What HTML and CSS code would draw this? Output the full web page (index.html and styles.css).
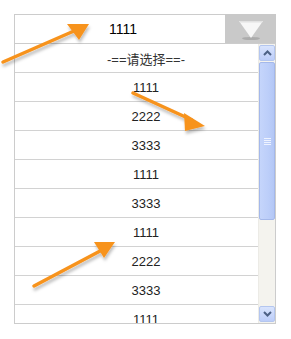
FILE: index.html
```html
<!DOCTYPE html>
<html lang="zh">
<head>
    <meta charset="UTF-8">
    <title>下拉选择</title>
    <link rel="stylesheet" href="styles.css">
</head>
<body>
    <div class="combo">
        <div class="combo-head">
            <span class="combo-value">1111</span>
            <span class="combo-btn">
                <svg width="28" height="22" viewBox="0 0 28 22">
                    <ellipse cx="14" cy="19.5" rx="9" ry="1.6" fill="#9a9a9a" opacity="0.6"/>
                    <polygon points="2,2 26,2 14,19" fill="#f7f7f7"/>
                    <polygon points="2,2 26,2 25,3.5 3,3.5" fill="#e2e2e2"/>
                </svg>
            </span>
        </div>
        <div class="combo-list">
            <ul class="options">
                <li>-==请选择==-</li>
                <li>1111</li>
                <li>2222</li>
                <li>3333</li>
                <li>1111</li>
                <li>3333</li>
                <li>1111</li>
                <li>2222</li>
                <li>3333</li>
                <li>1111</li>
            </ul>
            <div class="scrollbar">
                <div class="sb-btn">
                    <svg width="9" height="6" viewBox="0 0 9 6"><polyline points="1,5 4.5,1.5 8,5" fill="none" stroke="#4d6185" stroke-width="2"/></svg>
                </div>
                <div class="sb-thumb">
                    <span class="grip"></span>
                </div>
                <div class="sb-track"></div>
                <div class="sb-btn">
                    <svg width="9" height="6" viewBox="0 0 9 6"><polyline points="1,1 4.5,4.5 8,1" fill="none" stroke="#4d6185" stroke-width="2"/></svg>
                </div>
            </div>
        </div>
    </div>

    <svg class="notes" width="291" height="339" viewBox="0 0 291 339">
        <defs>
            <filter id="shade" x="-20%" y="-20%" width="140%" height="160%">
                <feDropShadow dx="1" dy="3" stdDeviation="1.5" flood-color="#000" flood-opacity="0.25"/>
            </filter>
        </defs>
        <g fill="#f7931e" stroke="#f7931e" filter="url(#shade)">
            <line x1="3" y1="62" x2="74" y2="31" stroke-width="3.5" stroke-linecap="round"/>
            <polygon points="89,24 67,24 79,40" stroke="none"/>
            <line x1="133" y1="93" x2="192" y2="120" stroke-width="3.5" stroke-linecap="round"/>
            <polygon points="205,126 184,113 185,131" stroke="none"/>
            <line x1="34" y1="286" x2="102" y2="250" stroke-width="3.5" stroke-linecap="round"/>
            <polygon points="115,242 94,242 104,258" stroke="none"/>
        </g>
    </svg>
</body>
</html>
```

FILE: styles.css
```css
body {
    margin: 0;
    background-color: #ffffff;
    font-family: "Liberation Sans", Arial, "Noto Sans CJK SC", sans-serif;
}
.combo {
    margin: 14px 0 0 14px;
    width: 260px;
    border: 1px solid #cccccc;
}
.combo-head {
    display: flex;
    height: 28px;
    border-bottom: 1px solid #cccccc;
}
.combo-value {
    flex: 1;
    display: flex;
    align-items: center;
    justify-content: center;
    padding-left: 6px;
    font-size: 14px;
    color: #000000;
}
.combo-btn {
    width: 51px;
    margin-right: -1px;
    margin-top: -1px;
    height: 29px;
    background-color: #c9c9c9;
    display: flex;
    align-items: center;
    justify-content: center;
}
.combo-btn svg {
    margin-top: 3px;
}
.combo-list {
    display: flex;
    height: 279px;
    overflow: hidden;
}
.options {
    flex: 1;
    list-style: none;
    margin: 0;
    padding: 0;
}
.options li {
    height: 28px;
    border-bottom: 1px solid #d2d2d2;
    display: flex;
    align-items: center;
    justify-content: center;
    padding-left: 19px;
    font-size: 13px;
    color: #222222;
}
.options li:first-child {
    font-family: "Liberation Sans", "Noto Sans CJK SC", sans-serif;
    font-size: 13px;
    color: #333333;
}
.scrollbar {
    width: 16px;
    display: flex;
    flex-direction: column;
    padding: 1px 0;
    background-color: #f4f3ee;
    border-left: 1px solid #ecebe6;
}
.sb-btn {
    height: 14px;
    border: 1px solid #b4c6ef;
    border-radius: 2px;
    background: linear-gradient(#d9e4fd, #bccdf9);
    display: flex;
    align-items: center;
    justify-content: center;
}
.sb-thumb {
    height: 156px;
    margin-top: 1px;
    border: 1px solid #a4b8ea;
    border-radius: 2px;
    background: linear-gradient(90deg, #c5d5fb, #bccef9 60%, #b3c7f6);
    display: flex;
    align-items: center;
    justify-content: center;
}
.grip {
    width: 7px;
    height: 7px;
    background: repeating-linear-gradient(#eef3ff 0 1px, transparent 1px 2px);
}
.sb-track {
    flex: 1;
}
.notes {
    position: absolute;
    left: 0;
    top: 0;
    pointer-events: none;
}
```
